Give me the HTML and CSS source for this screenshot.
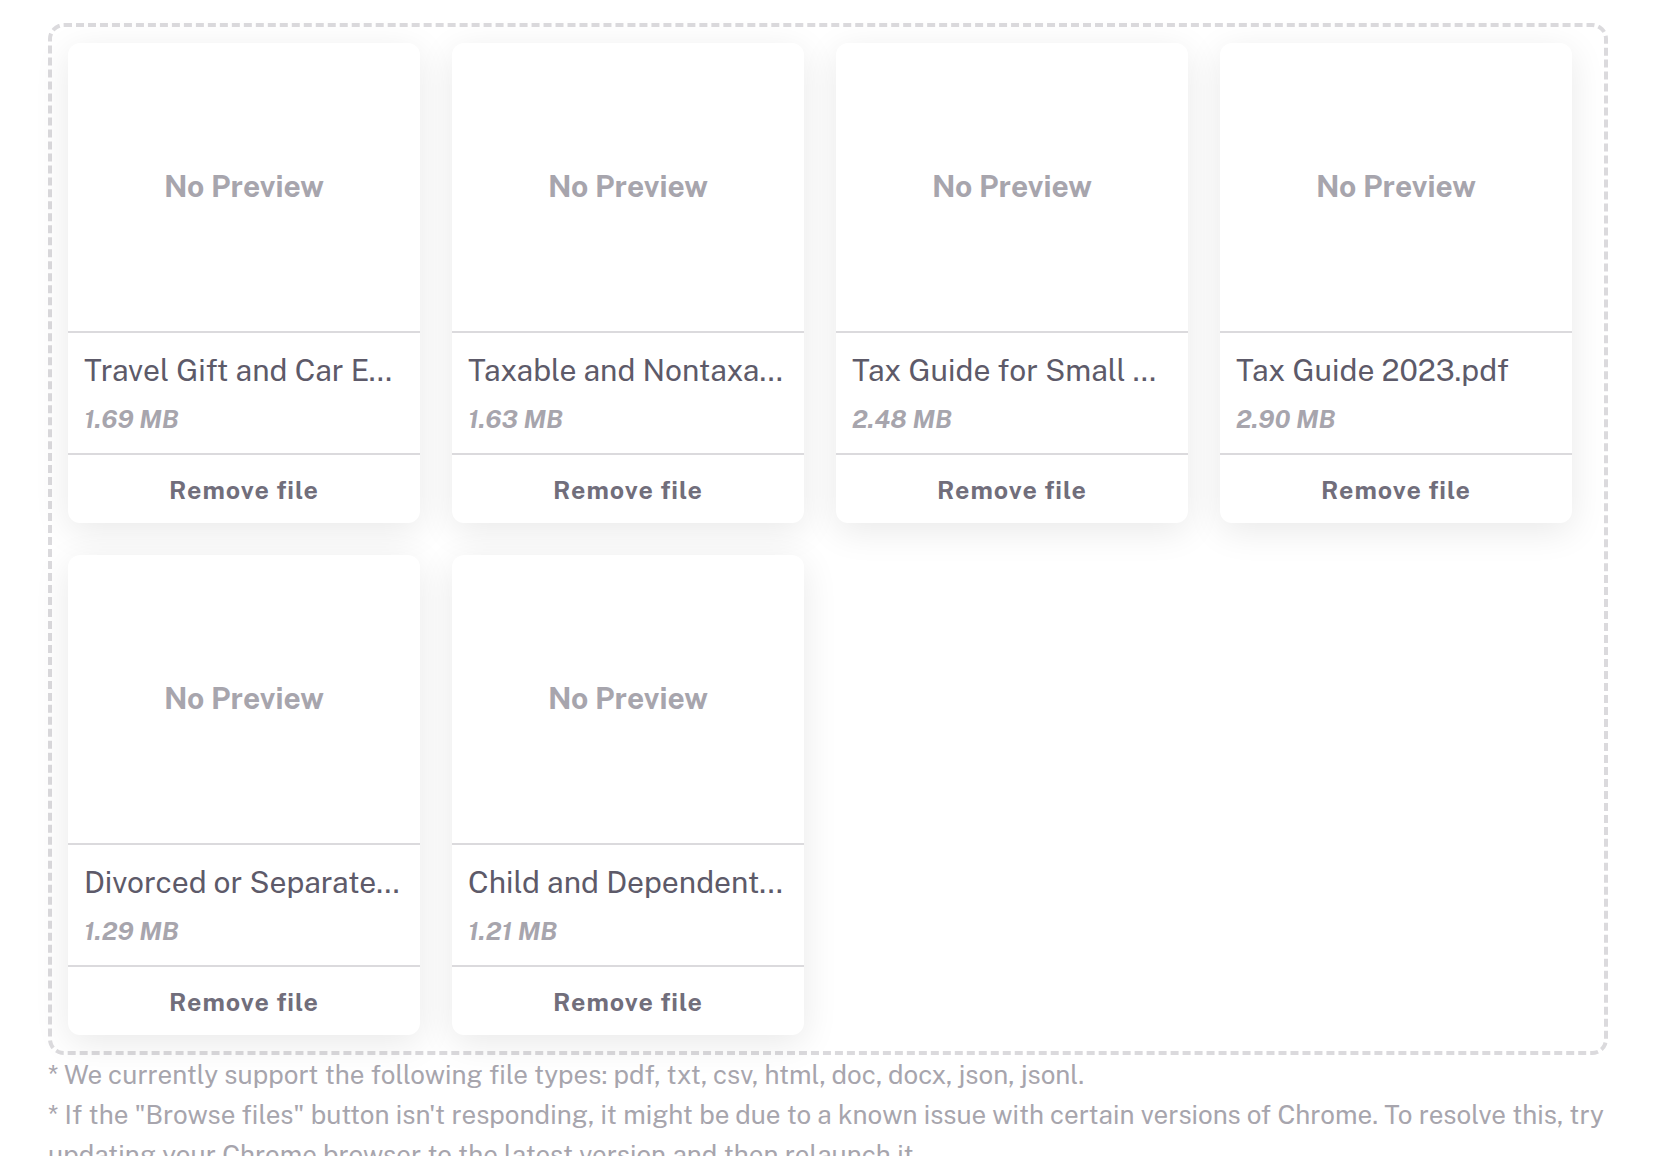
FILE: index.html
```html
<!DOCTYPE html>
<html lang="en">
<head>
<meta charset="utf-8">
<title>Upload files</title>
<link rel="stylesheet" href="styles.css">
</head>
<body>
<main class="uploader">
  <section class="dropzone" aria-label="Files to upload">
    <article class="file">
      <div class="preview">No Preview</div>
      <div class="details"><p class="name">Travel Gift and Car E...</p><p class="size">1.69 MB</p></div>
      <button class="remove" type="button">Remove file</button>
    </article>
    <article class="file">
      <div class="preview">No Preview</div>
      <div class="details"><p class="name">Taxable and Nontaxa...</p><p class="size">1.63 MB</p></div>
      <button class="remove" type="button">Remove file</button>
    </article>
    <article class="file">
      <div class="preview">No Preview</div>
      <div class="details"><p class="name">Tax Guide for Small ...</p><p class="size">2.48 MB</p></div>
      <button class="remove" type="button">Remove file</button>
    </article>
    <article class="file">
      <div class="preview">No Preview</div>
      <div class="details"><p class="name">Tax Guide 2023.pdf</p><p class="size">2.90 MB</p></div>
      <button class="remove" type="button">Remove file</button>
    </article>
    <article class="file">
      <div class="preview">No Preview</div>
      <div class="details"><p class="name">Divorced or Separate...</p><p class="size">1.29 MB</p></div>
      <button class="remove" type="button">Remove file</button>
    </article>
    <article class="file">
      <div class="preview">No Preview</div>
      <div class="details"><p class="name">Child and Dependent...</p><p class="size">1.21 MB</p></div>
      <button class="remove" type="button">Remove file</button>
    </article>
  </section>
  <div class="notes">
    <p class="note">* We currently support the following file types: pdf, txt, csv, html, doc, docx, json, jsonl.</p>
    <p class="note">* If the "Browse files" button isn't responding, it might be due to a known issue with certain versions of Chrome. To resolve this, try updating your Chrome browser to the latest version and then relaunch it.</p>
  </div>
</main>
</body>
</html>
```

FILE: styles.css
```css
* {
  box-sizing: border-box;
}

body {
  margin: 0;
  background: #fff;
  color: #5d5a69;
  font-family: "Public Sans", Inter, "Liberation Sans", sans-serif;
}

p {
  margin: 0;
}

.uploader {
  padding: 23px 68px 0 48px;
}

.dropzone {
  display: grid;
  grid-template-columns: repeat(auto-fill, 352px);
  gap: 32px;
  padding: 16px;
  border: 4px dashed #dbdadd;
  border-radius: 16px;
}

.file {
  display: flex;
  flex-direction: column;
  border-radius: 12px;
  background: #fff;
  box-shadow: 0 8px 36px rgba(0, 0, 0, 0.09);
}

.preview {
  display: flex;
  align-items: center;
  justify-content: center;
  height: 288px;
  padding-bottom: 2px;
  color: #a7a5ad;
  font-size: 30px;
  font-weight: 700;
}

.details {
  padding: 16px 16px 12px;
  border: solid #dbdadd;
  border-width: 2px 0;
}

.name {
  font-size: 30px;
  line-height: 42px;
  white-space: nowrap;
}

.size {
  padding-top: 6px;
  color: #a7a5ad;
  font-size: 25px;
  font-style: italic;
  font-weight: 700;
  line-height: 44px;
}

.remove {
  height: 68px;
  padding: 2px 0 0;
  border: 0;
  border-radius: 0 0 12px 12px;
  background: transparent;
  color: #716e7b;
  font-family: inherit;
  font-size: 25px;
  font-weight: 700;
  letter-spacing: 1px;
  cursor: pointer;
}

.note {
  color: #a7a5ad;
  font-size: 26px;
  line-height: 40px;
}
```
